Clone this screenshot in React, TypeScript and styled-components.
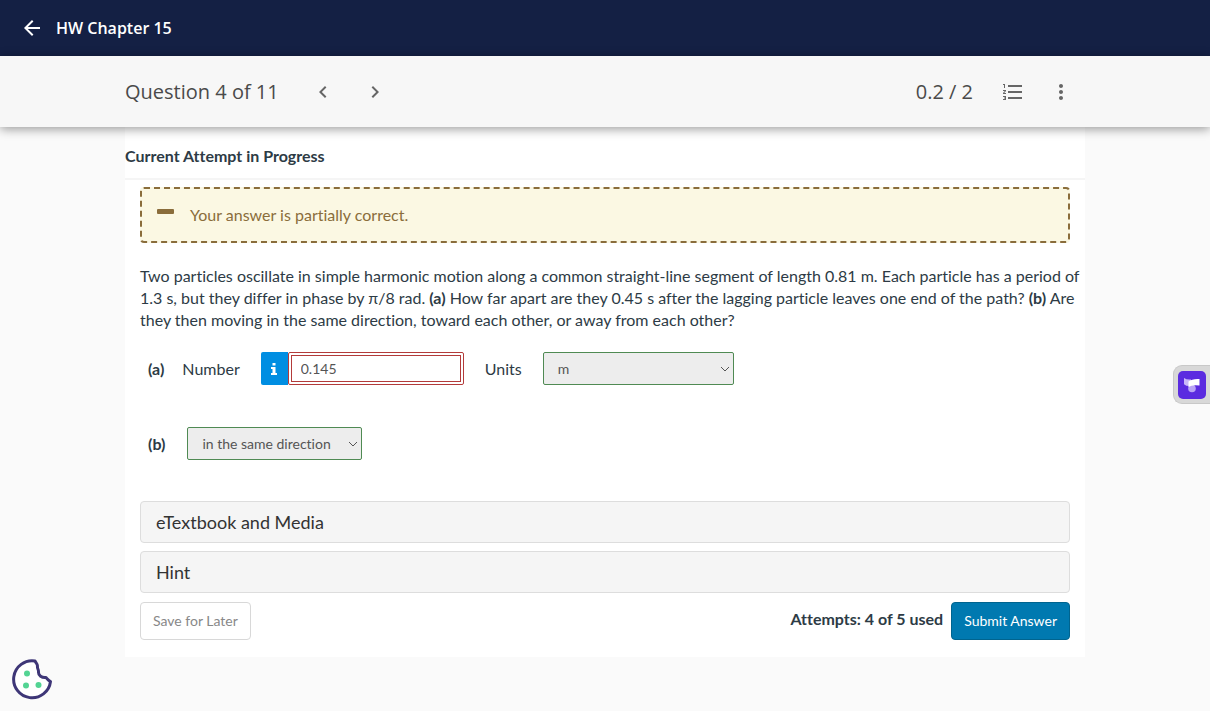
import React from "react";
import styled, { createGlobalStyle } from "styled-components";

const GlobalStyle = createGlobalStyle`
  *, *::before, *::after { box-sizing: border-box; }
  body {
    margin: 0;
    background: #fafafa;
    color: #2d3b45;
    font-family: Lato, "Liberation Sans", sans-serif;
    font-size: 16px;
    line-height: 22px;
    font-variant-ligatures: none;
  }
  button, input, select {
    margin: 0;
    font-family: inherit;
    font-variant-ligatures: inherit;
  }
`;

const AppBar = styled.header`
  display: flex;
  align-items: center;
  gap: 12px;
  height: 56px;
  padding: 0 20px;
  background: #142044;
  color: #fff;
`;

const AppTitle = styled.h1`
  margin: 0;
  font: 600 16px/24px "Open Sans", sans-serif;
`;

const IconButton = styled.button<{ $size?: number }>`
  display: flex;
  align-items: center;
  justify-content: center;
  width: ${(p) => p.$size ?? 48}px;
  height: ${(p) => p.$size ?? 48}px;
  padding: 0;
  border: 0;
  background: none;
  color: inherit;
  cursor: pointer;
`;

const Glyph = styled.svg.attrs({ viewBox: "0 0 24 24", "aria-hidden": true })`
  display: block;
  width: 24px;
  height: 24px;
  fill: currentColor;
`;

const QuestionBar = styled.nav`
  position: relative;
  height: 71px;
  padding: 0 125px;
  background: #f7f7f7;
  color: #4a4a4a;
  box-shadow: 0 2px 10px rgba(0, 0, 0, 0.4);
`;

const BarInner = styled.div`
  display: flex;
  align-items: center;
  justify-content: space-between;
  height: 100%;
`;

const BarGroup = styled.div<{ $gap: number }>`
  display: flex;
  align-items: center;
  gap: ${(p) => p.$gap}px;
  color: #666;
`;

const BarText = styled.span`
  color: #4a4a4a;
  font: 400 20px/28px "Open Sans", sans-serif;
`;

const Arrows = styled.div`
  display: flex;
  gap: 4px;
`;

const Card = styled.main`
  margin: 0 125px;
  background: #fff;
`;

const CardTitle = styled.h2`
  margin: 0;
  padding: 18px 0 11px;
  border-bottom: 2px solid #f5f5f5;
  font-size: 16px;
  line-height: 22px;
  font-weight: 700;
`;

const CardBody = styled.div`
  padding: 7px 15px 17px;
`;

const Alert = styled.div`
  display: flex;
  align-items: center;
  gap: 15px;
  height: 56px;
  padding: 0 15px;
  border: 2px dashed #8a6d3b;
  border-radius: 4px;
  background: #fbf8e3;
  color: #8a6d3b;
`;

const AlertIcon = styled.svg`
  width: 18px;
  height: 14px;
`;

const Prompt = styled.p`
  margin: 22px -15px 21px 0;
`;

const AnswerRow = styled.div`
  display: flex;
  align-items: center;
  height: 33px;
  margin-bottom: 42px;
  padding-left: 8px;

  &:last-of-type {
    margin-bottom: 0;
  }
`;

const PartLabel = styled.strong<{ $gap: number }>`
  margin-right: ${(p) => p.$gap}px;
`;

const FieldLabel = styled.label`
  margin-right: 21px;
`;

const NumberGroup = styled.div`
  display: flex;
  width: 203px;
  height: 33px;
  margin-right: 21px;
`;

const InfoButton = styled.button`
  display: flex;
  align-items: center;
  justify-content: center;
  width: 27px;
  padding: 0;
  border: 0;
  border-radius: 2px 0 0 2px;
  background: #008ee2;
  color: #fff;
`;

const NumberInput = styled.input`
  flex: 1;
  min-width: 0;
  padding: 0 9px;
  border: 4px double #b33b3a;
  border-radius: 2px;
  background: #fff;
  color: #555;
  font-size: 14px;
`;

const SelectBox = styled.div<{ $width: number }>`
  position: relative;
  width: ${(p) => p.$width}px;
  height: 33px;
`;

const Select = styled.select`
  width: 100%;
  height: 100%;
  padding: 0 14px;
  border: 1px solid #4f8a53;
  border-radius: 2px;
  background: #ededed;
  color: #555;
  font-size: 14px;
  appearance: none;
`;

const SelectArrow = styled.svg`
  position: absolute;
  top: 14px;
  right: 4px;
  width: 10px;
  height: 6px;
  pointer-events: none;
`;

const Answers = styled.form`
  margin: 0 0 41px;
`;

const Accordion = styled.button`
  display: block;
  width: 100%;
  height: 42px;
  margin-bottom: 8px;
  padding: 0 15px;
  border: 1px solid #ddd;
  border-radius: 4px;
  background: #f5f5f5;
  color: #333;
  font-size: 18px;
  text-align: left;
`;

const Footer = styled.div`
  display: flex;
  align-items: center;
  justify-content: space-between;
  padding-top: 1px;
`;

const SubmitGroup = styled.div`
  display: flex;
  align-items: center;
  gap: 8px;
`;

const Attempts = styled.strong`
  padding-bottom: 4px;
`;

const Button = styled.button<{ $primary?: boolean }>`
  height: 38px;
  padding: 0 12px 2px;
  border: 1px solid ${(p) => (p.$primary ? "#00648f" : "#d8d8d8")};
  border-radius: 4px;
  background: ${(p) => (p.$primary ? "#0079b0" : "#fff")};
  color: ${(p) => (p.$primary ? "#fff" : "#888")};
  font-size: 14px;
`;

const SideTab = styled.button`
  position: fixed;
  top: 365px;
  right: 0;
  width: 37px;
  height: 39px;
  padding: 4px;
  border: 1px solid #c8c8c8;
  border-right: 0;
  border-radius: 9px 0 0 9px;
  background: #d8d8d8;
`;

const CookieButton = styled.button`
  position: fixed;
  left: 12px;
  bottom: 11px;
  width: 41px;
  height: 41px;
  padding: 0;
  border: 0;
  background: none;
`;

const Drawing = styled.svg`
  display: block;
`;

function Dropdown({ id, label, width, value }: { id: string; label?: string; width: number; value: string }) {
  return (
    <SelectBox $width={width}>
      <Select id={id} aria-label={label} defaultValue={value}>
        <option>{value}</option>
      </Select>
      <SelectArrow viewBox="0 0 10 6" aria-hidden>
        <path d="M1 1l4 4 4-4" fill="none" stroke="#555" strokeWidth="1" />
      </SelectArrow>
    </SelectBox>
  );
}

export default function App() {
  return (
    <>
      <GlobalStyle />
      <AppBar>
        <IconButton $size={24} aria-label="Back">
          <Glyph><path d="M20 11H7.83l5.59-5.59L12 4l-8 8 8 8 1.41-1.41L7.83 13H20v-2z" /></Glyph>
        </IconButton>
        <AppTitle>HW Chapter 15</AppTitle>
      </AppBar>
      <QuestionBar aria-label="Question navigation">
        <BarInner>
          <BarGroup $gap={20}>
            <BarText>Question 4 of 11</BarText>
            <Arrows>
              <IconButton aria-label="Previous question">
                <Glyph><path d="M15.41 7.41L14 6l-6 6 6 6 1.41-1.41L10.83 12z" /></Glyph>
              </IconButton>
              <IconButton aria-label="Next question">
                <Glyph><path d="M10 6L8.59 7.41 13.17 12l-4.58 4.59L10 18l6-6z" /></Glyph>
              </IconButton>
            </Arrows>
          </BarGroup>
          <BarGroup $gap={16}>
            <BarText>0.2 / 2</BarText>
            <BarGroup $gap={0}>
              <IconButton aria-label="Question list">
                <Glyph><path d="M2 17h2v.5H3v1h1v.5H2v1h3v-4H2v1zm1-9h1V4H2v1h1v3zm-1 3h1.800L2 13.100v.900h3v-1H3.200L5 10.900V10H2v1zm5-6v2h14V5H7zm0 14h14v-2H7v2zm0-6h14v-2H7v2z" /></Glyph>
              </IconButton>
              <IconButton aria-label="More options">
                <Glyph><path d="M12 8c1.100 0 2-.9 2-2s-.9-2-2-2-2 .9-2 2 .9 2 2 2zm0 2c-1.100 0-2 .9-2 2s.9 2 2 2 2-.9 2-2-.9-2-2-2zm0 6c-1.100 0-2 .9-2 2s.9 2 2 2 2-.9 2-2-.9-2-2-2z" /></Glyph>
              </IconButton>
            </BarGroup>
          </BarGroup>
        </BarInner>
      </QuestionBar>
      <Card>
        <CardTitle>Current Attempt in Progress</CardTitle>
        <CardBody>
          <Alert role="status">
            <AlertIcon viewBox="0 0 18 14" aria-hidden>
              <rect x="0" y="1" width="17" height="5" rx="1" fill="#8a6d3b" />
            </AlertIcon>
            Your answer is partially correct.
          </Alert>
          <Prompt>
            Two particles oscillate in simple harmonic motion along a common straight-line segment of length 0.81 m. Each
            particle has a period of 1.3 s, but they differ in phase by π/8 rad. <strong>(a)</strong> How far apart are
            they 0.45 s after the lagging particle leaves one end of the path? <strong>(b)</strong> Are they then moving
            in the same direction, toward each other, or away from each other?
          </Prompt>
          <Answers>
            <AnswerRow>
              <PartLabel $gap={18}>(a)</PartLabel>
              <FieldLabel htmlFor="number">Number</FieldLabel>
              <NumberGroup>
                <InfoButton type="button" aria-label="Number format information">
                  <Drawing width="6" height="12" viewBox="0 0 6 12" aria-hidden>
                    <path d="M1.500 0h3v2.500h-3zM0 4h4.500v6H6v2H0v-2h1.500V6H0z" fill="currentColor" />
                  </Drawing>
                </InfoButton>
                <NumberInput id="number" type="text" defaultValue="0.145" />
              </NumberGroup>
              <FieldLabel htmlFor="units">Units</FieldLabel>
              <Dropdown id="units" width={191} value="m" />
            </AnswerRow>
            <AnswerRow>
              <PartLabel $gap={22}>(b)</PartLabel>
              <Dropdown id="direction" label="Part b" width={175} value="in the same direction" />
            </AnswerRow>
          </Answers>
          <Accordion>eTextbook and Media</Accordion>
          <Accordion>Hint</Accordion>
          <Footer>
            <Button>Save for Later</Button>
            <SubmitGroup>
              <Attempts>Attempts: 4 of 5 used</Attempts>
              <Button $primary>Submit Answer</Button>
            </SubmitGroup>
          </Footer>
        </CardBody>
      </Card>
      <SideTab aria-label="Open assistant">
        <Drawing width="28" height="28" viewBox="0 0 28 28" aria-hidden>
          <rect width="28" height="28" rx="5" fill="#5b2be0" />
          <circle cx="14" cy="17.500" r="3.800" fill="#b9a3f5" />
          <path d="M6 7q2.500 1.800 7 1.500v6.500q-5 .3-7-1.800z" fill="#c9b8f8" />
          <path d="M10.500 10.500Q14 7.500 21.500 8v6.500Q14 13.500 10.500 16z" fill="#fff" />
        </Drawing>
      </SideTab>
      <CookieButton aria-label="Cookie settings">
        <Drawing width="41" height="41" viewBox="0 0 41 41" aria-hidden>
          <path
            d="M23 2A18.500 18.500 0 1 0 38.500 22.500C36.500 21.500 35.500 20 34 18.500C30 19 26 16.500 26.500 12.500C26.500 10 25 9.500 25.500 7C25.500 5 24 4 23 2Z"
            fill="#fff"
            stroke="#3e3677"
            strokeWidth="3"
            strokeLinejoin="round"
          />
          <circle cx="15" cy="14.500" r="3" fill="#53d493" />
          <circle cx="14" cy="26.500" r="3" fill="#53d493" />
          <circle cx="26.500" cy="26" r="3" fill="#53d493" />
        </Drawing>
      </CookieButton>
    </>
  );
}
